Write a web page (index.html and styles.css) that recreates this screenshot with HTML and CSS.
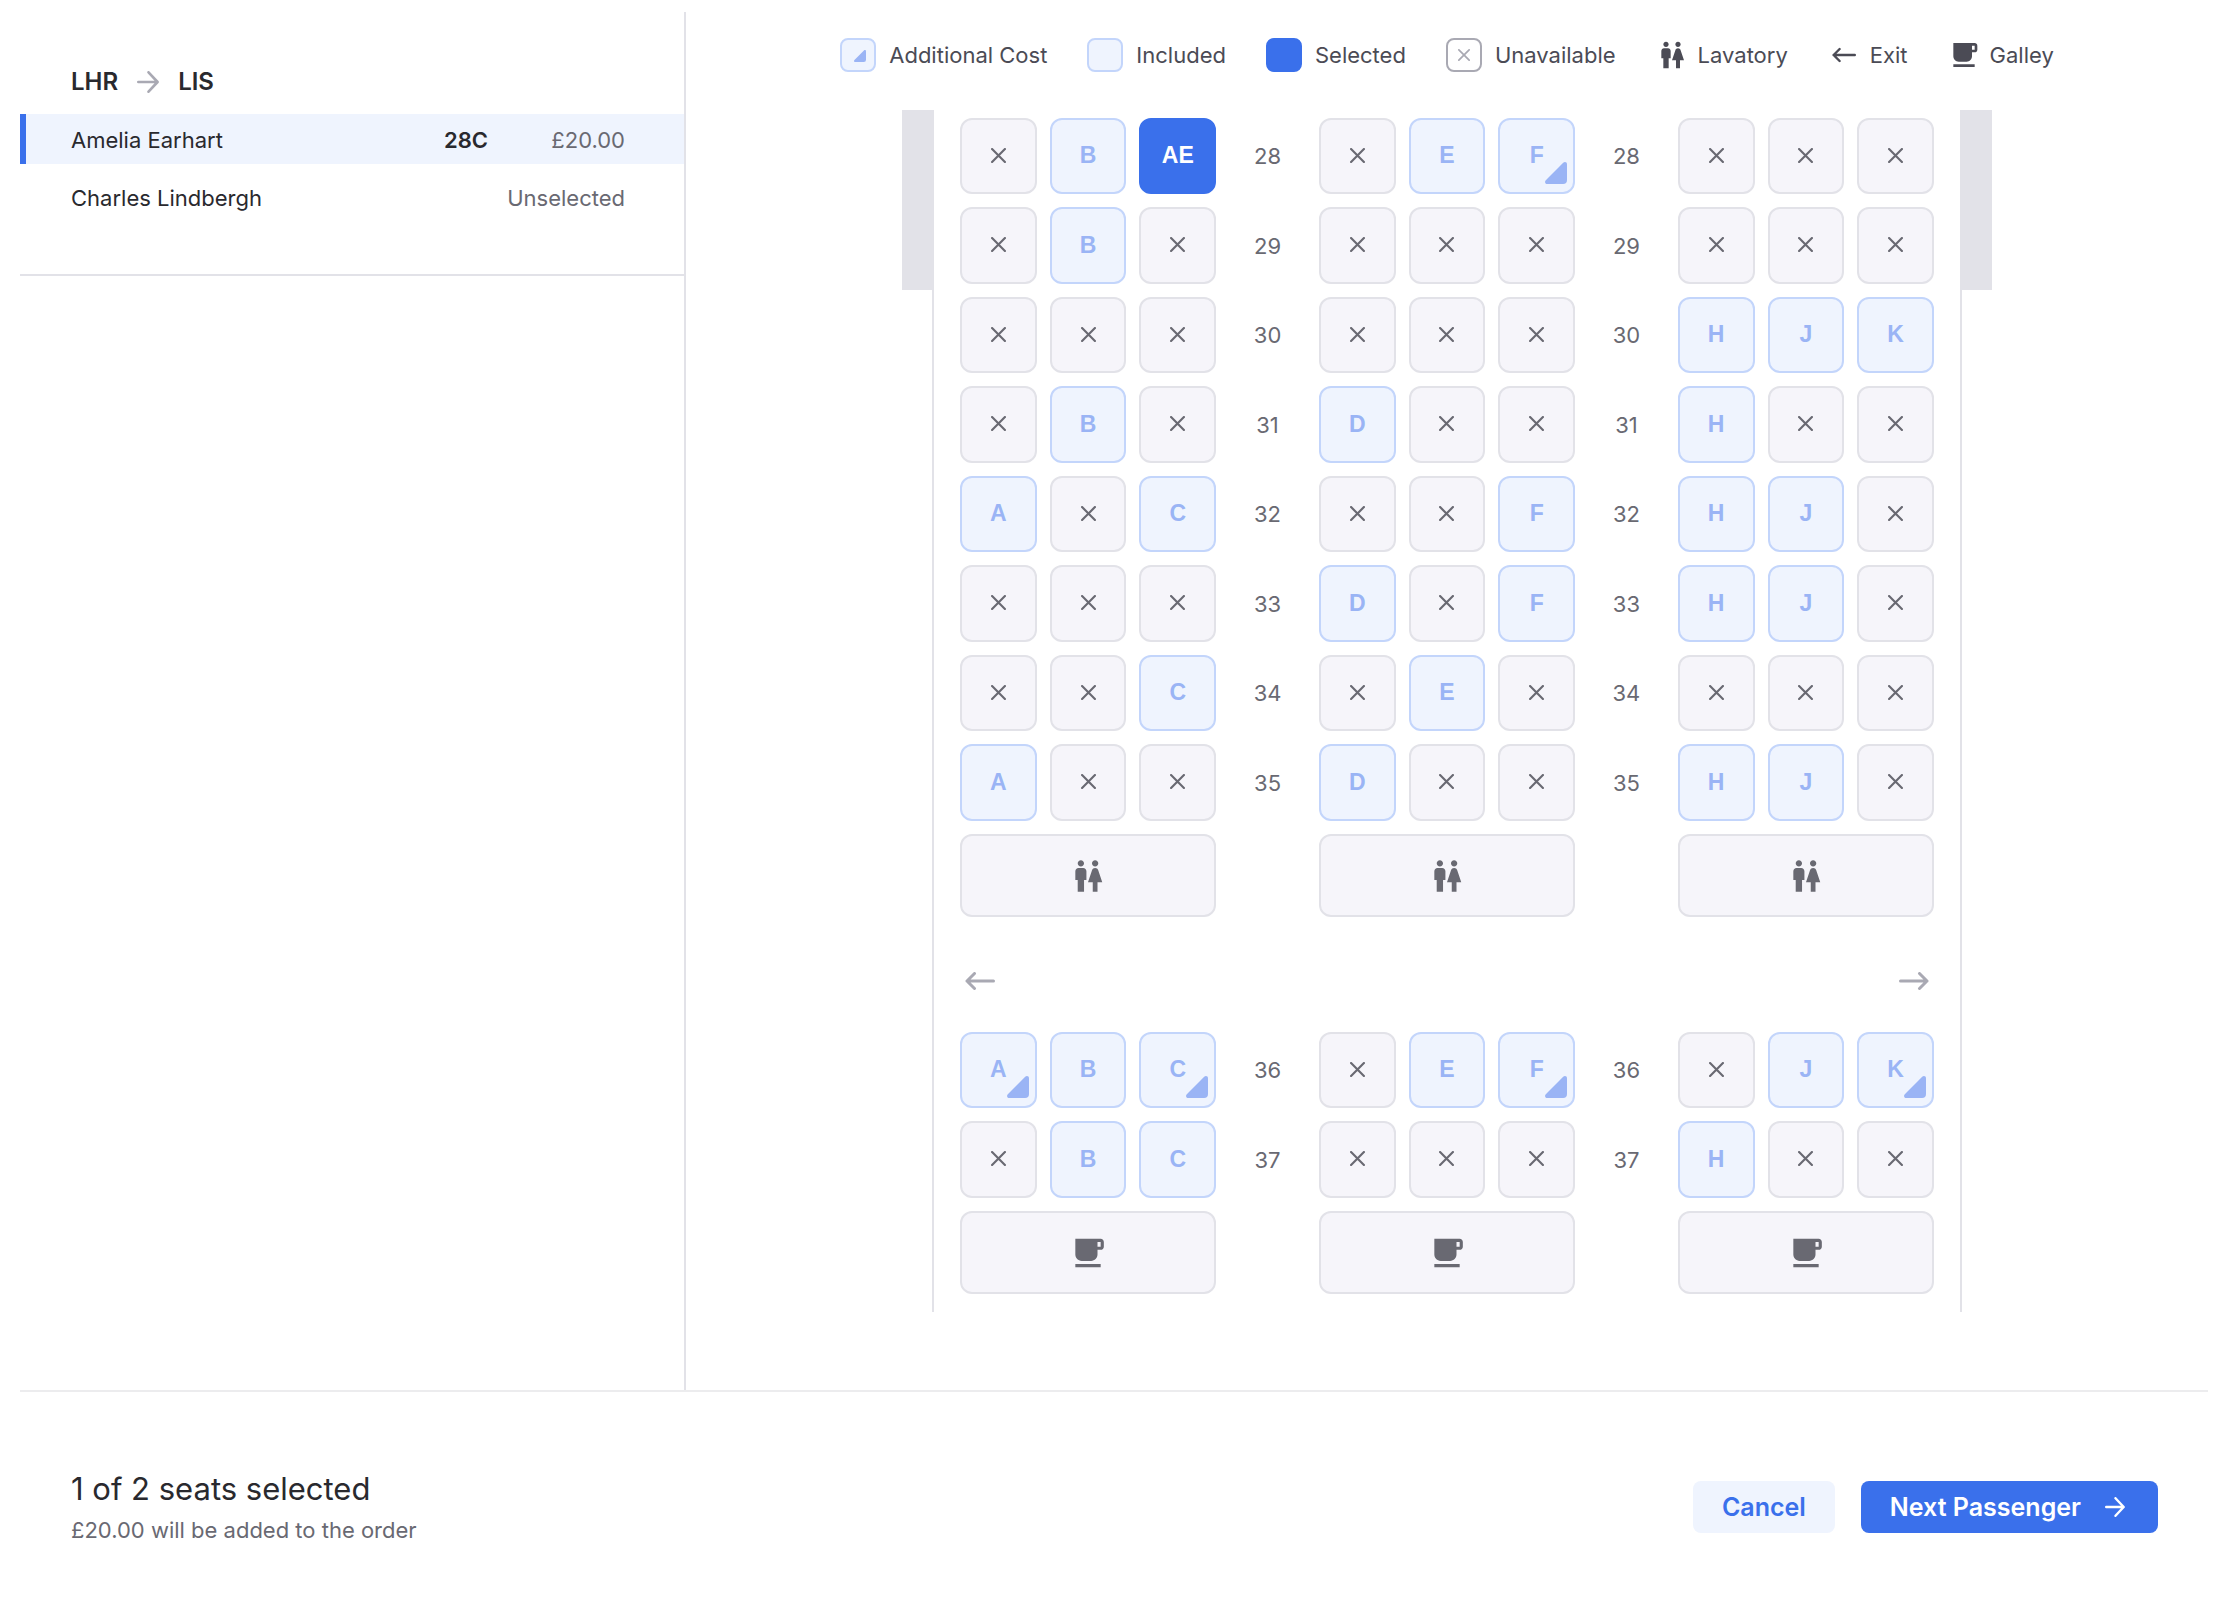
FILE: index.html
```
<!DOCTYPE html>
<html lang="en">

<head>
    <meta charset="UTF-8">
    <meta name="viewport" content="width=device-width, initial-scale=1.0">
    <title>Seat Selection</title>
    <link rel="stylesheet" href="styles.css">
</head>

<body>
    <!-- Shared icons -->
    <svg class="sprite" aria-hidden="true">
        <symbol id="icon-cross" viewBox="0 0 14 14">
            <path d="M1 1l12 12M13 1L1 13" fill="none" stroke="currentColor" stroke-width="2" stroke-linecap="round" />
        </symbol>
        <symbol id="icon-fee" viewBox="0 0 22 22">
            <path d="M18.2 .8C19.8-.7 22 .2 22 2.200V18a4 4 0 0 1-4 4H2.200C.2 22-.7 19.800 .8 18.200z" fill="currentColor" />
        </symbol>
        <symbol id="icon-arrow" viewBox="0 0 20 20">
            <path d="M1.200 10h17M10.500 1.200l8.200 8.800-8.200 8.800" fill="none" stroke="currentColor" stroke-width="2.400" stroke-linecap="round" stroke-linejoin="round" />
        </symbol>
        <symbol id="icon-exit-left" viewBox="0 0 30 18">
            <path d="M28.500 9H2M9.500 1.500L2 9l7.500 7.500" fill="none" stroke="currentColor" stroke-width="3" stroke-linecap="round" stroke-linejoin="round" />
        </symbol>
        <symbol id="icon-exit-right" viewBox="0 0 30 18">
            <path d="M1.500 9H28M20.500 1.500L28 9l-7.500 7.500" fill="none" stroke="currentColor" stroke-width="3" stroke-linecap="round" stroke-linejoin="round" />
        </symbol>
        <symbol id="icon-lavatory" viewBox="0 0 24 24">
            <path fill="currentColor" d="M5.500 22v-7.500H4V9c0-1.100.9-2 2-2h3c1.100 0 2 .9 2 2v5.500H9.500V22h-4zM18 22v-6h3l-2.540-7.630C18.180 7.550 17.420 7 16.560 7h-.12c-.86 0-1.630.55-1.900 1.370L12 16h3v6h3zM7.500 6c1.110 0 2-.89 2-2s-.89-2-2-2-2 .89-2 2 .9 2 2 2zm9 0c1.110 0 2-.89 2-2s-.89-2-2-2-2 .89-2 2 .9 2 2 2z" />
        </symbol>
        <symbol id="icon-galley" viewBox="0 0 24 24">
            <path fill="currentColor" d="M20 3H4v10c0 2.210 1.790 4 4 4h6c2.210 0 4-1.790 4-4v-3h2c1.110 0 2-.89 2-2V5c0-1.110-.89-2-2-2zm0 5h-2V5h2v3zM4 19h16v2H4z" />
        </symbol>
    </svg>

    <div class="app">
        <main class="main">
            <!-- Passenger list -->
            <aside class="sidebar">
                <div class="segment">
                    <h2 class="route">
                        LHR
                        <svg class="route-arrow"><use href="#icon-arrow" /></svg>
                        LIS
                    </h2>
                    <div class="passengers">
                        <button type="button" class="passenger active">
                            <span class="passenger-name">Amelia Earhart</span>
                            <span class="passenger-seat">28C</span>
                            <span class="passenger-price">£20.00</span>
                        </button>
                        <button type="button" class="passenger">
                            <span class="passenger-name">Charles Lindbergh</span>
                            <span class="passenger-price">Unselected</span>
                        </button>
                    </div>
                </div>
            </aside>

            <section class="seat-map">
                <!-- Legend -->
                <div class="legend">
                    <div class="legend-item"><span class="swatch fee"><svg><use href="#icon-fee" /></svg></span>Additional Cost</div>
                    <div class="legend-item"><span class="swatch"></span>Included</div>
                    <div class="legend-item"><span class="swatch selected"></span>Selected</div>
                    <div class="legend-item"><span class="swatch unavailable"><svg><use href="#icon-cross" /></svg></span>Unavailable</div>
                    <div class="legend-item icon-item"><svg><use href="#icon-lavatory" /></svg>Lavatory</div>
                    <div class="legend-item icon-item"><svg class="legend-exit"><use href="#icon-exit-left" /></svg>Exit</div>
                    <div class="legend-item icon-item"><svg><use href="#icon-galley" /></svg>Galley</div>
                </div>

                <div class="aircraft">
                    <div class="wing"></div>
                    <div class="cabin" id="cabin">
                        <!-- Rows will be populated here -->
                    </div>
                    <div class="wing"></div>
                </div>
            </section>
        </main>

        <footer class="footer">
            <div class="summary">
                <p class="summary-title">1 of 2 seats selected</p>
                <p class="summary-text">£20.00 will be added to the order</p>
            </div>
            <div class="actions">
                <button type="button" class="btn btn-secondary">Cancel</button>
                <button type="button" class="btn btn-primary">
                    Next Passenger
                    <svg><use href="#icon-arrow" /></svg>
                </button>
            </div>
        </footer>
    </div>

    <script>
        const cabin = document.getElementById('cabin');

        // x = unavailable, letter = included, letter+ = additional cost, * = selected
        const sections = [
            {
                rows: [
                    [28, 'x B *', 'x E F+', 'x x x'],
                    [29, 'x B x', 'x x x', 'x x x'],
                    [30, 'x x x', 'x x x', 'H J K'],
                    [31, 'x B x', 'D x x', 'H x x'],
                    [32, 'A x C', 'x x F', 'H J x'],
                    [33, 'x x x', 'D x F', 'H J x'],
                    [34, 'x x C', 'x E x', 'x x x'],
                    [35, 'A x x', 'D x x', 'H J x']
                ],
                amenity: 'lavatory'
            },
            {
                rows: [
                    [36, 'A+ B C+', 'x E F+', 'x J K+'],
                    [37, 'x B C', 'x x x', 'H x x']
                ],
                amenity: 'galley'
            }
        ];

        function icon(name) {
            return `<svg><use href="#icon-${name}" /></svg>`;
        }

        function renderSeat(code, row) {
            if (code === 'x') {
                return `<button type="button" class="seat unavailable" aria-label="Unavailable" disabled>${icon('cross')}</button>`;
            }
            if (code === '*') {
                return '<button type="button" class="seat selected">AE</button>';
            }
            const letter = code[0];
            const fee = code.endsWith('+') ? icon('fee') : '';
            return `<button type="button" class="seat" aria-label="${row}${letter}">${letter}${fee}</button>`;
        }

        function renderRow([number, ...blocks]) {
            const seats = blocks.map(block => block.split(' ').map(code => renderSeat(code, number)).join(''));
            return `<div class="row">${seats.join(`<span class="row-number">${number}</span>`)}</div>`;
        }

        function renderSection(section) {
            const amenity = `<div class="amenity">${icon(section.amenity)}</div>`;
            return `<div class="rows">${section.rows.map(renderRow).join('')}</div>
                <div class="row amenities">${amenity.repeat(3)}</div>`;
        }

        // The exit row sits between the two sections
        cabin.innerHTML = sections.map(renderSection).join(
            `<div class="exits">${icon('exit-left')}${icon('exit-right')}</div>`
        );
    </script>
</body>

</html>
```
FILE: styles.css
```
/* General Styles */
* {
    box-sizing: border-box;
}

body {
    margin: 0;
    font-family: Inter, sans-serif;
    font-size: 22px;
    line-height: 30px;
    color: #29292e;
    background-color: #fff;
}

h2,
p {
    margin: 0;
}

button {
    font: inherit;
    border: none;
    cursor: pointer;
}

svg {
    display: block;
    flex: none;
}

.sprite {
    position: absolute;
    width: 0;
    height: 0;
}

.app {
    padding: 12px 28px 0 20px;
}

.main {
    display: flex;
}

/* Sidebar */
.sidebar {
    flex: 0 0 666px;
    border-right: 2px solid #e2e2e8;
}

.segment {
    padding: 55px 0 52px;
    border-bottom: 2px solid #e2e2e8;
}

.route {
    display: flex;
    align-items: center;
    gap: 19px;
    margin-bottom: 17px;
    padding-left: 51px;
    font-size: 24px;
    font-weight: 600;
}

.route-arrow {
    width: 22px;
    height: 22px;
    color: #a9a9b3;
}

.passengers {
    display: flex;
    flex-direction: column;
    gap: 8px;
}

.passenger {
    display: flex;
    align-items: center;
    width: 100%;
    height: 50px;
    padding: 2px 59px 0 45px;
    border-left: 6px solid transparent;
    background: none;
    color: #29292e;
    text-align: left;
}

.passenger.active {
    border-left-color: #3a70eb;
    background-color: #eff4fe;
}

.passenger-name {
    flex: 1;
}

.passenger-seat {
    font-weight: 600;
}

.passenger-price {
    min-width: 137px;
    text-align: right;
    color: #696972;
}

/* Legend */
.seat-map {
    flex: 1;
    padding: 26px 0 78px;
}

.legend {
    display: flex;
    justify-content: center;
    gap: 40px;
    margin-bottom: 38px;
    color: #4b4b55;
}

.legend-item {
    display: flex;
    align-items: center;
    gap: 13px;
    height: 34px;
}

.icon-item {
    gap: 10px;
}

.icon-item svg {
    width: 32px;
    height: 32px;
}

.icon-item .legend-exit {
    width: 24px;
    margin: 0 4px;
}

.swatch {
    display: flex;
    align-items: center;
    justify-content: center;
    width: 36px;
    height: 34px;
    border: 2px solid #c3d5fb;
    border-radius: 8px;
    background-color: #eff4fe;
}

.swatch.fee {
    align-items: flex-end;
    justify-content: flex-end;
    padding: 8px;
    color: #9ab4f5;
}

.swatch svg {
    width: 12px;
    height: 12px;
}

.swatch.selected {
    border-color: #3a70eb;
    background-color: #3a70eb;
}

.swatch.unavailable {
    border-color: #a9a9b3;
    background-color: #fff;
    color: #a9a9b3;
}

/* Aircraft */
.aircraft {
    display: flex;
    justify-content: center;
    align-items: flex-start;
}

.wing {
    width: 30px;
    height: 180px;
    background-color: #e2e2e8;
}

.cabin {
    display: flex;
    flex-direction: column;
    gap: 13px;
    width: 1030px;
    padding: 8px 26px 18px;
    border: solid #e2e2e8;
    border-width: 0 2px;
}

.rows {
    display: grid;
    grid-auto-rows: 76px 77px;
    row-gap: 13px;
}

.row {
    display: grid;
    grid-template-columns: repeat(11, 1fr);
    column-gap: 13px;
}

.row-number {
    align-self: center;
    text-align: center;
    color: #696972;
}

.seat {
    position: relative;
    display: flex;
    align-items: center;
    justify-content: center;
    padding: 0 0 2px;
    border: 2px solid #c3d5fb;
    border-radius: 12px;
    background-color: #eff4fe;
    color: #9ab4f5;
    font-family: "Liberation Sans", Arial, sans-serif;
    font-size: 23px;
    font-weight: 700;
}

.seat svg {
    position: absolute;
    right: 6px;
    bottom: 8px;
    width: 22px;
    height: 22px;
}

.seat.selected {
    border-color: #3a70eb;
    background-color: #3a70eb;
    color: #fff;
}

.seat.unavailable {
    border-color: #e2e2e8;
    background-color: #f6f5fa;
    color: #696972;
    cursor: default;
}

.seat.unavailable svg {
    position: static;
    width: 15px;
    height: 15px;
}

.amenity {
    display: flex;
    grid-column: span 3;
    align-items: center;
    justify-content: center;
    height: 83px;
    border: 2px solid #e2e2e8;
    border-radius: 12px;
    background-color: #f6f5fa;
    color: #696972;
}

.amenity:nth-child(2) {
    grid-column: 5 / span 3;
}

.amenity:nth-child(3) {
    grid-column: 9 / span 3;
}

.amenity svg {
    width: 38px;
    height: 38px;
}

.exits {
    display: flex;
    align-items: center;
    justify-content: space-between;
    height: 89px;
    padding: 12px 5px 0;
    color: #a9a9b3;
}

.exits svg {
    width: 30px;
    height: 18px;
}

/* Footer */
.footer {
    display: flex;
    align-items: center;
    justify-content: space-between;
    padding: 77px 50px 60px 51px;
    border-top: 2px solid #ececee;
}

.summary-title {
    margin-bottom: 6px;
    font-size: 31px;
    line-height: 40px;
}

.summary-text {
    color: #696972;
}

.actions {
    display: flex;
    gap: 26px;
}

.btn {
    display: flex;
    align-items: center;
    gap: 24px;
    height: 52px;
    padding: 0 29px;
    border-radius: 8px;
    font-size: 25px;
    font-weight: 600;
}

.btn svg {
    width: 20px;
    height: 20px;
}

.btn-secondary {
    background-color: #eff4fe;
    color: #3a70eb;
}

.btn-primary {
    padding-right: 33px;
    background-color: #3a70eb;
    color: #fff;
}
```
